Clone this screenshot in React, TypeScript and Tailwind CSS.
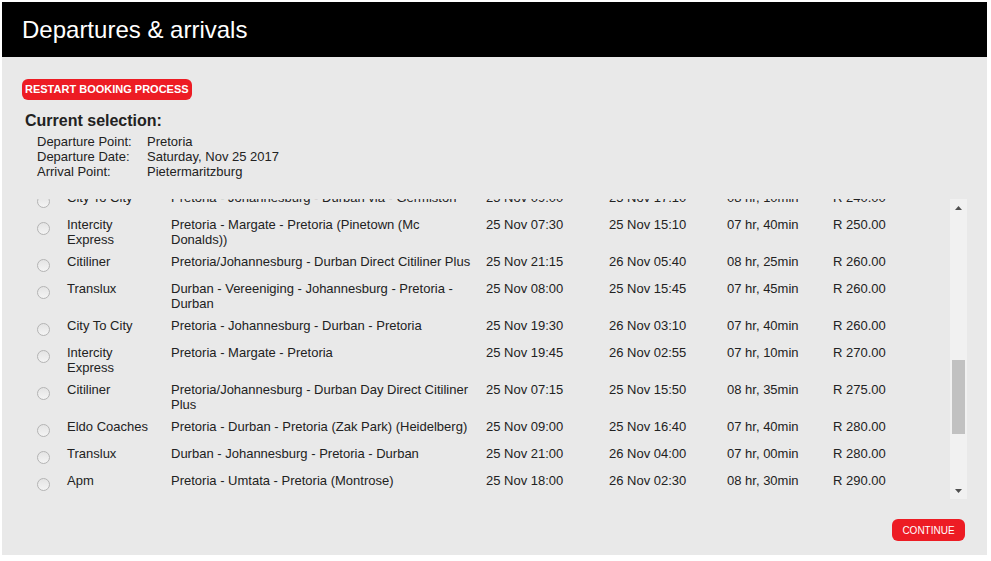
import React from 'react';

type Trip = {
    operator: string;
    route: string;
    depart: string;
    arrive: string;
    duration: string;
    price: string;
};

const trips: Trip[] = [
    { operator: 'City To City', route: 'Pretoria - Johannesburg - Durban via - Germiston', depart: '25 Nov 09:00', arrive: '25 Nov 17:10', duration: '08 hr, 10min', price: 'R 240.00' },
    { operator: 'Intercity Express', route: 'Pretoria - Margate - Pretoria (Pinetown (Mc Donalds))', depart: '25 Nov 07:30', arrive: '25 Nov 15:10', duration: '07 hr, 40min', price: 'R 250.00' },
    { operator: 'Citiliner', route: 'Pretoria/Johannesburg - Durban Direct Citiliner Plus', depart: '25 Nov 21:15', arrive: '26 Nov 05:40', duration: '08 hr, 25min', price: 'R 260.00' },
    { operator: 'Translux', route: 'Durban - Vereeniging - Johannesburg - Pretoria - Durban', depart: '25 Nov 08:00', arrive: '25 Nov 15:45', duration: '07 hr, 45min', price: 'R 260.00' },
    { operator: 'City To City', route: 'Pretoria - Johannesburg - Durban - Pretoria', depart: '25 Nov 19:30', arrive: '26 Nov 03:10', duration: '07 hr, 40min', price: 'R 260.00' },
    { operator: 'Intercity Express', route: 'Pretoria - Margate - Pretoria', depart: '25 Nov 19:45', arrive: '26 Nov 02:55', duration: '07 hr, 10min', price: 'R 270.00' },
    { operator: 'Citiliner', route: 'Pretoria/Johannesburg - Durban Day Direct Citiliner Plus', depart: '25 Nov 07:15', arrive: '25 Nov 15:50', duration: '08 hr, 35min', price: 'R 275.00' },
    { operator: 'Eldo Coaches', route: 'Pretoria - Durban - Pretoria (Zak Park) (Heidelberg)', depart: '25 Nov 09:00', arrive: '25 Nov 16:40', duration: '07 hr, 40min', price: 'R 280.00' },
    { operator: 'Translux', route: 'Durban - Johannesburg - Pretoria - Durban', depart: '25 Nov 21:00', arrive: '26 Nov 04:00', duration: '07 hr, 00min', price: 'R 280.00' },
    { operator: 'Apm', route: 'Pretoria - Umtata - Pretoria (Montrose)', depart: '25 Nov 18:00', arrive: '26 Nov 02:30', duration: '08 hr, 30min', price: 'R 290.00' },
    { operator: 'Greyhound', route: 'Pretoria - Durban', depart: '25 Nov 22:00', arrive: '26 Nov 06:30', duration: '08 hr, 30min', price: 'R 300.00' },
    { operator: 'Intercape', route: 'Pretoria - Johannesburg - Durban', depart: '25 Nov 20:30', arrive: '26 Nov 05:00', duration: '08 hr, 30min', price: 'R 310.00' },
];

const TripRow: React.FC<{ trip: Trip }> = ({ trip }) => (
    <div className="grid grid-cols-[45px_104px_315px_123px_118px_106px_1fr] py-1 leading-[14.5px]">
        <div className="pl-[15px]">
            <div className="mt-[4px] mb-[2px] h-[13px] w-[13px] rounded-full border border-[#b4b4b4] bg-gradient-to-b from-[#e4e4e4] to-[#f4f4f4]" />
        </div>
        <div className="pr-[14px]">{trip.operator}</div>
        <div className="pr-3">{trip.route}</div>
        <div>{trip.depart}</div>
        <div>{trip.arrive}</div>
        <div>{trip.duration}</div>
        <div>{trip.price}</div>
    </div>
);

const FakeScrollbar: React.FC = () => (
    <div className="flex w-[17px] flex-col bg-[#f1f1f1]">
        <div className="flex h-[17px] items-center justify-center">
            <svg width="7" height="4" viewBox="0 0 7 4"><path d="M3.5 0 L7 4 L0 4 Z" fill="#505050" /></svg>
        </div>
        <div className="flex-1 px-[2px] pt-[144px]">
            <div className="h-[74px] bg-[#c1c1c1]" />
        </div>
        <div className="flex h-[17px] items-center justify-center">
            <svg width="7" height="4" viewBox="0 0 7 4"><path d="M0 0 L7 0 L3.5 4 Z" fill="#505050" /></svg>
        </div>
    </div>
);

const App: React.FC = () => {
    return (
        <div className="h-[561px] w-[991px] bg-white p-[2px] font-['Liberation_Sans',Arial,sans-serif] text-[13px] text-[#222]">
            <div className="w-[985px]">
                <div className="flex h-[55px] items-center bg-black pl-5">
                    <h1 className="text-[24px] leading-[28px] text-white">Departures &amp; arrivals</h1>
                </div>
                <div className="flex h-[498px] flex-col bg-[#e9e9e9] px-5 pt-[22px]">
                    <div>
                        <button className="flex h-[21px] items-center rounded-[6px] bg-[#ed1c24] px-[3px] text-[11px] font-bold text-white">
                            RESTART BOOKING PROCESS
                        </button>
                    </div>
                    <h2 className="mt-3 ml-[3px] text-[16px] font-bold leading-[18px]">Current selection:</h2>
                    <div className="mt-1 grid grid-cols-[110px_1fr] pl-[15px] leading-[15px]">
                        <span>Departure Point:</span>
                        <span>Pretoria</span>
                        <span>Departure Date:</span>
                        <span>Saturday, Nov 25 2017</span>
                        <span>Arrival Point:</span>
                        <span>Pietermaritzburg</span>
                    </div>
                    <div className="mt-5 flex h-[300px]">
                        <div className="flex-1 overflow-hidden">
                            <div className="-mt-[12px]">
                                {trips.map((t, i) => (
                                    <TripRow key={i} trip={t} />
                                ))}
                            </div>
                        </div>
                        <FakeScrollbar />
                    </div>
                    <div className="mt-5 flex justify-end pr-[2px]">
                        <button className="flex h-[22px] w-[73px] items-center justify-center rounded-[6px] bg-[#ed1c24] text-[10px] text-white">
                            CONTINUE
                        </button>
                    </div>
                </div>
            </div>
        </div>
    );
};

export default App;
